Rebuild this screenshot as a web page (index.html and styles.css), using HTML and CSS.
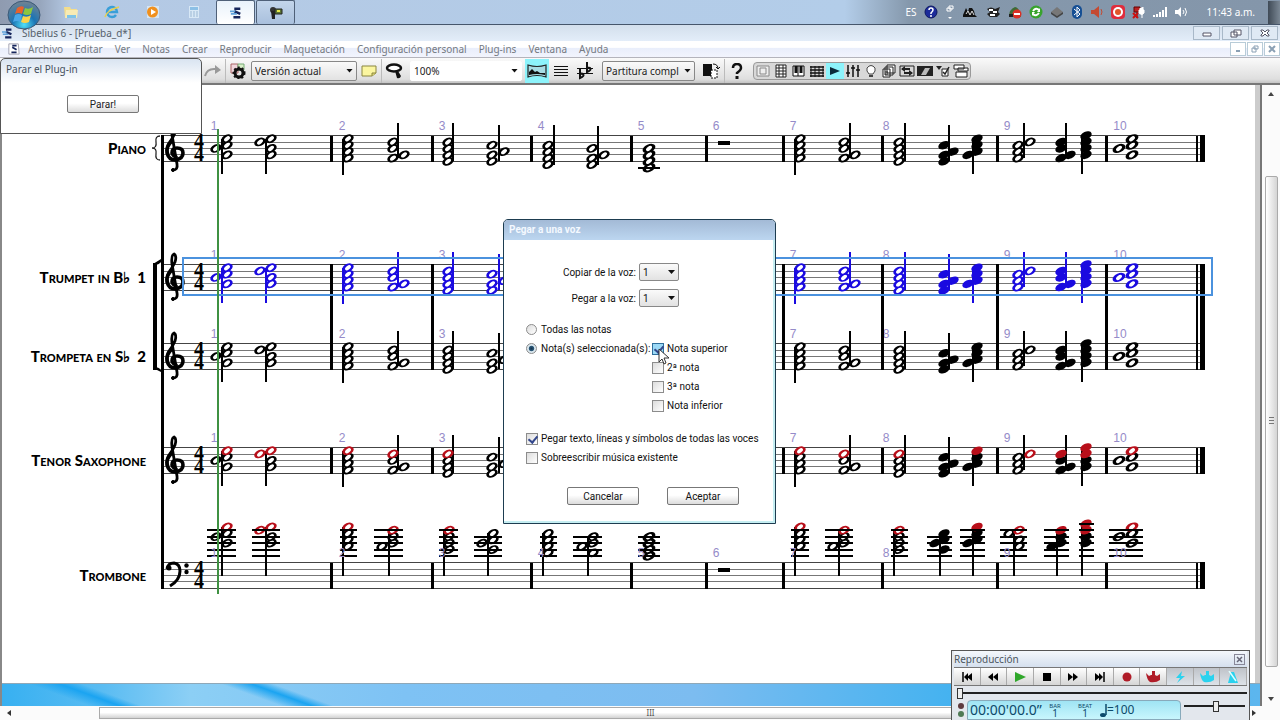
FILE: index.html
```html
<!doctype html>
<html lang="es">
<head>
    <meta charset="UTF-8">
    <meta name="viewport" content="width=device-width, initial-scale=1.0">
    <title>Sibelius 6 - [Prueba_d*]</title>
    <link rel="stylesheet" href="styles.css">
</head>
<body>
<header class="taskbar">
    <button type="button" class="start" aria-label="Inicio">
        <svg width="34" height="30" viewBox="0 0 34 30">
            <defs>
                <radialGradient id="orb" cx="50%" cy="85%" r="80%">
                    <stop offset="0" stop-color="#4fe0f8"/>
                    <stop offset="0.45" stop-color="#1b74b4"/>
                    <stop offset="1" stop-color="#6c8294"/>
                </radialGradient>
            </defs>
            <ellipse cx="17" cy="15" rx="16" ry="14" fill="url(#orb)" stroke="#3c5a78"/>
            <path d="M10 8q4-3 7-1l-2 7q-4-2-7 0z" fill="#e8622c"/>
            <path d="M18 8q4 2 8-1l-2 7q-4 2-8 0z" fill="#8cc63e"/>
            <path d="M8 15q4-2 7 0l-2 7q-3-2-7 0z" fill="#4aa8e8"/>
            <path d="M16 16q4 2 8-1l-2 7q-4 2-8 0z" fill="#fbd24a"/>
        </svg>
    </button>
    <nav class="launch">
        <button type="button" aria-label="Explorador">
            <svg width="16" height="14" viewBox="0 0 16 14"><path d="M1 2h6l1 2h6v8H2z" fill="#f3dd8c"/><path d="M3 5h12l-1 8H2z" fill="#f8ebb4"/><path d="M4 10h9v3H4z" fill="#7fc4e8"/></svg>
        </button>
        <button type="button" aria-label="Internet Explorer">
            <svg width="16" height="14" viewBox="0 0 16 14"><path d="M12 10a5 5 0 1 1 1-3H4" fill="none" stroke="#3a9fd8" stroke-width="2.5"/><path d="M1 12Q3 5 15 2" fill="none" stroke="#e6cf52" stroke-width="1.5"/></svg>
        </button>
        <button type="button" aria-label="Reproductor">
            <svg width="14" height="14" viewBox="0 0 14 14"><path d="M1 1h12v12H1z" fill="#d5e6f5"/><circle cx="6.5" cy="7" r="5.5" fill="#f0901e"/><path d="M5 4l5 3-5 3z" fill="#fff"/></svg>
        </button>
        <button type="button" aria-label="Calculadora">
            <svg width="12" height="14" viewBox="0 0 12 14"><path d="M1 1h10v12H1z" fill="#d8e8f6"/><path d="M2 2h8v3H2z" fill="#8cc0e6"/><path d="M2 7h8M2 9h8M2 11h8" stroke="#9bb8d4" stroke-dasharray="2 1"/></svg>
        </button>
    </nav>
    <button type="button" class="task active" aria-label="Sibelius">
        <svg width="12" height="12" viewBox="0 0 14 14"><path d="M5 2h7M5 5l7 3M4 12h8" stroke="#17265c" stroke-width="3"/><path d="M0 5h6M1 8h7" stroke="#5fa2dc" stroke-width="2"/></svg>
    </button>
    <button type="button" class="task" aria-label="Captura">
        <svg width="16" height="14" viewBox="0 0 16 14"><circle cx="5" cy="4" r="3" fill="#333"/><path d="M3 5h4v8H4z" fill="#222"/><path d="M7 3h7v5H7z" fill="#5c7434" stroke="#222"/><path d="M9 5h3" stroke="#e4e84a" stroke-width="2"/></svg>
    </button>
    <div class="tray">
        <span class="lang">ES</span>
        <svg width="14" height="14" viewBox="0 0 14 14"><circle cx="7" cy="7" r="6" fill="#1c2c9a" stroke="#0d1760"/><path d="M5 5q0-2 2-2t2 2q0 1-2 3v1M7 10v2" fill="none" stroke="#fff" stroke-width="1.5"/></svg>
        <svg width="10" height="14" viewBox="0 0 10 14"><path d="M4 1h4v3H4zM2 3h4v3H2z" fill="none" stroke="#fff"/><path d="M3 12h4l-2 2z" fill="#fff"/></svg>
        <svg width="16" height="14" viewBox="0 0 16 14"><path d="M1 10l3-7 2 4 1-4h3l2 3 1 4 2 2H1z" fill="#111"/><path d="M4 9l2-3 2 4 2-4 2 4" fill="none" stroke="#ddd"/></svg>
        <svg width="16" height="14" viewBox="0 0 16 14"><path d="M2 4q4-3 8 0l5-2-2 5 2 2-3 3H5L2 9l3-2z" fill="#222"/><path d="M4 5h4M8 7h4M5 10h5" stroke="#fff" stroke-width="2"/></svg>
        <svg width="14" height="14" viewBox="0 0 14 14"><path d="M1 12q0-8 6-10 5 1 6 10z" fill="#3d6b36"/><circle cx="9" cy="9" r="4.5" fill="#d93025"/><path d="M6 9h6" stroke="#fff" stroke-width="2"/><path d="M1 9h4v3H1z" fill="#222"/></svg>
        <svg width="14" height="14" viewBox="0 0 14 14"><circle cx="7" cy="7" r="6.5" fill="#38a32c"/><path d="M4 6q3-4 6-1M10 8q-3 4-6 1" fill="none" stroke="#fff" stroke-width="2"/><path d="M11 3v4H8zM3 11V7h3z" fill="#fff"/></svg>
        <svg width="14" height="14" viewBox="0 0 14 14"><path d="M7 2l6 5-6 4-6-4z" fill="#777"/><path d="M1 7l6 4 6-4v2l-6 4-6-4z" fill="#444"/></svg>
        <svg width="12" height="14" viewBox="0 0 12 14"><rect x="1" width="10" height="14" rx="5" fill="#164f94"/><path d="M3 4l6 5-3 3V2l3 3-6 5" fill="none" stroke="#fff"/></svg>
        <svg width="14" height="14" viewBox="0 0 14 14"><path d="M1 5h3l5-4v12L4 9H1z" fill="#c44a32"/><path d="M11 4q2 3 0 6" fill="none" stroke="#c44a32"/></svg>
        <svg width="14" height="14" viewBox="0 0 14 14"><rect width="14" height="14" rx="4" fill="#e02c3c"/><circle cx="7" cy="7" r="5" fill="#fff"/><circle cx="7" cy="7" r="3" fill="#e0562a"/></svg>
        <svg width="14" height="14" viewBox="0 0 14 14"><path d="M2 2h6v5H2zM5 7v6" fill="#b22" stroke="#600"/><path d="M8 3v2h-1v3q3 3 5 0V5h-1V2M10 9v4" fill="#fff" stroke="#fff"/><path d="M1 8l5 5M6 8l-5 5" stroke="#c11" stroke-width="2"/></svg>
        <svg width="14" height="14" viewBox="0 0 14 14"><path d="M1 12v-2M4 12V9M7 12V7M10 12V5M13 12V2" stroke="#fff" stroke-width="2"/></svg>
        <svg width="14" height="14" viewBox="0 0 14 14"><path d="M1 5h3l3-3v10L4 9H1z" fill="#fff"/><path d="M9 5q2 2 0 4M11 3q3 4 0 8" fill="none" stroke="#fff"/></svg>
        <time class="clock">11:43 a.m.</time>
        <button type="button" class="peek" aria-label="Mostrar escritorio"></button>
    </div>
</header>

<div class="titlebar">
    <svg width="11" height="11" viewBox="0 0 14 14"><path d="M5 2h7M5 5l7 3M4 12h8" stroke="#17265c" stroke-width="3"/><path d="M0 5h6M1 8h7" stroke="#5fa2dc" stroke-width="2"/></svg>
    <h1>Sibelius 6 - [Prueba_d*]</h1>
    <div class="win-btns">
        <button type="button" aria-label="Minimizar"><svg width="10" height="8" viewBox="0 0 10 8"><path d="M1 4h8v3H1z" fill="#fff" stroke="#556"/></svg></button>
        <button type="button" aria-label="Restaurar"><svg width="12" height="9" viewBox="0 0 12 9"><path d="M4 1h7v5H4zM1 3h6v5H1z" fill="#fff" stroke="#556"/></svg></button>
        <button type="button" aria-label="Cerrar"><svg width="10" height="8" viewBox="0 0 10 8"><path d="M1 1h2l2 2 2-2h2v1L7 4l2 2v1H7L5 5 3 7H1V6l2-2-2-2z" fill="#fff" stroke="#556"/></svg></button>
    </div>
</div>

<nav class="menubar">
    <svg width="12" height="12" viewBox="0 0 14 14"><path d="M1 1h11l1 12H1z" fill="#fff" stroke="#99a"/><path d="M5 3h5M5 5l5 3M4 11h6" stroke="#17265c" stroke-width="2"/></svg>
    <a href="#">Archivo</a>
    <a href="#">Editar</a>
    <a href="#">Ver</a>
    <a href="#">Notas</a>
    <a href="#">Crear</a>
    <a href="#">Reproducir</a>
    <a href="#">Maquetación</a>
    <a href="#">Configuración personal</a>
    <a href="#">Plug-ins</a>
    <a href="#">Ventana</a>
    <a href="#">Ayuda</a>
    <div class="doc-btns">
        <button type="button" aria-label="Minimizar documento"><svg width="8" height="8" viewBox="0 0 8 8"><path d="M2 6h4" stroke="#8aa0b4" stroke-width="2"/></svg></button>
        <button type="button" aria-label="Restaurar documento"><svg width="8" height="8" viewBox="0 0 8 8"><path d="M3 1h4v3H3zM1 3h4v4H1z" fill="#fff" stroke="#8aa0b4"/></svg></button>
        <button type="button" aria-label="Cerrar documento"><svg width="8" height="8" viewBox="0 0 8 8"><path d="M1 1l6 6M7 1L1 7" stroke="#8aa0b4" stroke-width="2"/></svg></button>
    </div>
</nav>

<div class="toolbar">
    <button type="button" class="tool redo" aria-label="Rehacer"><svg width="18" height="14" viewBox="0 0 18 14"><path d="M1 12Q3 4 12 5" fill="none" stroke="#999" stroke-width="2"/><path d="M11 1l6 5-6 4z" fill="#999"/></svg></button>
    <span class="sep"></span>
    <button type="button" class="tool" aria-label="Versión"><svg width="16" height="16" viewBox="0 0 16 16"><path d="M1 1h7v9H1z" fill="#f0d6dc" stroke="#a66"/><path d="M8 1h6v6H8z" fill="#d8f0c8" stroke="#7a7"/><circle cx="9" cy="10" r="4" fill="none" stroke="#111" stroke-width="3"/><circle cx="9" cy="10" r="5.5" fill="none" stroke="#111" stroke-width="2" stroke-dasharray="2 2"/></svg></button>
    <span class="pick version"><select aria-label="Versión"><option>Versión actual</option></select></span>
    <button type="button" class="tool" aria-label="Comentario"><svg width="16" height="12" viewBox="0 0 16 12"><path d="M1 1h14v7l-4 3H1z" fill="#fbf6a0" stroke="#8a8640"/><path d="M11 11V8h4" fill="#ddd670" stroke="#8a8640"/></svg></button>
    <span class="sep"></span>
    <button type="button" class="tool" aria-label="Zoom"><svg width="18" height="16" viewBox="0 0 18 16"><ellipse cx="9" cy="5" rx="7" ry="3.5" fill="#fff" stroke="#111" stroke-width="2.5"/><path d="M10 8h3l3 5q-1 3-4 2z" fill="#111"/></svg></button>
    <span class="pick zoom"><select aria-label="Nivel de zoom"><option>100%</option></select></span>
    <button type="button" class="tool on" aria-label="Panorama"><svg width="20" height="14" viewBox="0 0 20 14"><path d="M1 1q9 3 18 0v12q-9-3-18 0z" fill="#a8dce4" stroke="#222" stroke-width="1.2"/><path d="M2 8l3-3 3 3 2-1 3 2h5v2q-8-2-16 0z" fill="#111"/></svg></button>
    <button type="button" class="tool" aria-label="Pentagramas"><svg width="16" height="14" viewBox="0 0 16 14"><path d="M1 2.5h14M1 5.5h14M1 8.5h14M1 11.5h14" stroke="#111"/></svg></button>
    <button type="button" class="tool" aria-label="Transportar"><svg width="18" height="18" viewBox="0 0 18 18"><path d="M1 6.500h16M1 11.500h16" stroke="#111"/><path d="M4 6v10q5-2 3-4-2-1-3 1M11 0v10q5-2 3-4-2-1-3 1" fill="none" stroke="#111" stroke-width="2"/></svg></button>
    <span class="pick parts"><select aria-label="Parte"><option>Partitura compl</option></select></span>
    <button type="button" class="tool" aria-label="Cambiar parte"><svg width="18" height="18" viewBox="0 0 18 18"><path d="M1 2h9v12H1z" fill="#111"/><path d="M9 8h6v8H9z" fill="#fff" stroke="#111" stroke-dasharray="2 1"/><path d="M11 2q5 0 5 5M14 5l2 2 2-2" fill="none" stroke="#111"/></svg></button>
    <span class="sep"></span>
    <button type="button" class="tool help" aria-label="Ayuda"><svg width="12" height="16" viewBox="0 0 12 16"><path d="M2 5q0-4 4-4t4 4q0 2-4 5v1" fill="none" stroke="#111" stroke-width="2.5"/><path d="M6 13v3" stroke="#111" stroke-width="3"/></svg></button>
    <div class="panels">
        <button type="button" aria-label="Navegador"><svg width="14" height="12" viewBox="0 0 14 12"><path d="M1 1h12v10H1zM4 3h6v6H4z" fill="#eee" stroke="#888"/></svg></button>
        <button type="button" aria-label="Teclado numérico"><svg width="12" height="14" viewBox="0 0 12 14"><path d="M1 1h10v12H1zM4 1v12M8 1v12M1 4h10M1 7h10M1 10h10" fill="#fff" stroke="#222"/></svg></button>
        <button type="button" aria-label="Teclado"><svg width="14" height="12" viewBox="0 0 14 12"><path d="M1 1h11v10H1z" fill="#fff" stroke="#111"/><path d="M4 1v7M9 1v7" stroke="#111" stroke-width="3"/><path d="M6 1v10" stroke="#111"/></svg></button>
        <button type="button" aria-label="Diapasón"><svg width="16" height="12" viewBox="0 0 16 12"><path d="M1 2h14M1 5h14M1 8h14M1 11h14" stroke="#111" stroke-width="1.5"/><path d="M2 1v11M6 1v11M10 1v11M14 1v11" stroke="#111"/></svg></button>
        <button type="button" class="on" aria-label="Reproducción"><svg width="12" height="12" viewBox="0 0 12 12"><path d="M1 2l10 4-10 4z" fill="#0a2a3a"/></svg></button>
        <button type="button" aria-label="Mezclador"><svg width="14" height="14" viewBox="0 0 14 14"><path d="M2 1v12M7 1v12M12 1v12M0 9h4M5 4h4M10 6h4" stroke="#111" stroke-width="1.5"/></svg></button>
        <button type="button" aria-label="Ideas"><svg width="12" height="14" viewBox="0 0 12 14"><path d="M4 10q-3-3-2-6 4-5 8 0 1 3-2 6z" fill="#fff" stroke="#444"/><path d="M4 12h4" stroke="#444" stroke-width="2"/></svg></button>
        <button type="button" aria-label="Partes"><svg width="14" height="14" viewBox="0 0 14 14"><path d="M5 1h8v8H5zM3 3h8v8H3zM1 5h7v8H1z" fill="#fff" stroke="#222"/><path d="M3 8h3M3 10h3" stroke="#222"/></svg></button>
        <button type="button" aria-label="Comparar"><svg width="16" height="12" viewBox="0 0 16 12"><path d="M1 1h14M1 11h14M1 1v10M15 1v10" stroke="#222"/><path d="M3 4h8M5 8h8" stroke="#222" stroke-width="2"/><path d="M6 1v6L2 4zM10 5v6l4-3z" fill="#222"/></svg></button>
        <button type="button" aria-label="Vídeo"><svg width="16" height="12" viewBox="0 0 16 12"><path d="M0 1h16v10H0z" fill="#222"/><path d="M4 10l4-7h5l-4 7z" fill="#bbb"/></svg></button>
        <button type="button" aria-label="Propiedades"><svg width="14" height="12" viewBox="0 0 14 12"><path d="M0 1h6L3 5z" fill="#222"/><path d="M6 4h6v7H6z" fill="#fff" stroke="#222"/><path d="M7 7l2 2 4-7" fill="none" stroke="#222" stroke-width="1.5"/></svg></button>
        <button type="button" aria-label="Ventanas"><svg width="16" height="14" viewBox="0 0 16 14"><path d="M1 1h10v4H1zM5 4h10v3H5zM3 8h11v5H3z" fill="#fff" stroke="#222"/></svg></button>
    </div>
</div>

<main class="workspace">
    <div class="paper">
        <div class="page">
            <svg id="score" role="img" aria-label="Partitura"></svg>
        </div>
        <div class="desk"></div>
    </div>
    <div class="vscroll"><span class="up"></span><span class="thumb"></span><span class="down"></span></div>
</main>
<div class="hscroll"><span class="left"></span><span class="thumb">III</span><span class="right"></span></div>

<section class="window plugin">
    <h2>Parar el Plug-in</h2>
    <button type="button" class="btn">Parar!</button>
</section>

<form class="window dialog" onsubmit="return false">
    <h2>Pegar a una voz</h2>
    <div class="voices">
        <label for="from">Copiar de la voz:</label>
        <span class="pick"><select id="from"><option>1</option></select></span>
        <label for="to">Pegar a la voz:</label>
        <span class="pick"><select id="to"><option>1</option></select></span>
    </div>
    <div class="which">
        <label class="wide"><input type="radio" name="notes"> Todas las notas</label>
        <label><input type="radio" name="notes" checked> Nota(s) seleccionada(s):</label>
        <label class="hot"><input type="checkbox" checked> Nota superior</label>
        <label class="second"><input type="checkbox"> 2ª nota</label>
        <label class="second"><input type="checkbox"> 3ª nota</label>
        <label class="second"><input type="checkbox"> Nota inferior</label>
    </div>
    <div class="extras">
        <label><input type="checkbox" checked> Pegar texto, líneas y símbolos de todas las voces</label>
        <label><input type="checkbox"> Sobreescribir música existente</label>
    </div>
    <div class="actions">
        <button type="button" class="btn">Cancelar</button>
        <button type="submit" class="btn">Aceptar</button>
    </div>
    <svg class="cursor" width="12" height="18" viewBox="0 0 12 18"><path d="M1 1v13l3-3 2 5 2-1-2-5h5z" fill="#fff" stroke="#333"/></svg>
</form>

<section class="playback">
    <div class="pb-title">
        <h2>Reproducción</h2>
        <button type="button" aria-label="Cerrar"><svg width="9" height="9" viewBox="0 0 9 9"><path d="M2 2l5 5M7 2L2 7" stroke="#667" stroke-width="1.5"/></svg></button>
    </div>
    <div class="transport">
        <button type="button" aria-label="Inicio"><svg width="12" height="10" viewBox="0 0 12 10"><path d="M2 0v10" stroke="#000" stroke-width="1.5"/><path d="M7 1v8L3 5zM11 1v8L6 5z"/></svg></button>
        <button type="button" aria-label="Rebobinar"><svg width="12" height="10" viewBox="0 0 12 10"><path d="M6 1v8L1 5zM11 1v8L6 5z"/></svg></button>
        <button type="button" aria-label="Reproducir"><svg width="12" height="10" viewBox="0 0 12 10"><path d="M1 0l11 5-11 5z" fill="#2fa72a"/></svg></button>
        <button type="button" aria-label="Detener"><svg width="10" height="10" viewBox="0 0 10 10"><path d="M1 1h8v8H1z"/></svg></button>
        <button type="button" aria-label="Avanzar"><svg width="12" height="10" viewBox="0 0 12 10"><path d="M1 1v8l5-4zM6 1v8l5-4z"/></svg></button>
        <button type="button" aria-label="Final"><svg width="12" height="10" viewBox="0 0 12 10"><path d="M10 0v10" stroke="#000" stroke-width="1.5"/><path d="M1 1v8l5-4zM5 1v8l4-4z"/></svg></button>
        <button type="button" aria-label="Grabar"><svg width="10" height="10" viewBox="0 0 10 10"><circle cx="5" cy="5" r="4.5" fill="#b01c28"/></svg></button>
        <button type="button" aria-label="Flexi-time"><svg width="16" height="12" viewBox="0 0 16 12"><path d="M1 2l3 3q4-3 8 0l3-2v6q-4 3-10 2Q2 9 1 2zM7 0h3v4H7z" fill="#b01c28"/></svg></button>
        <button type="button" class="down" aria-label="Live playback"><svg width="12" height="12" viewBox="0 0 12 12"><path d="M8 0L2 7h4l-3 5 8-7H7z" fill="#2ad2ee"/></svg></button>
        <button type="button" class="down" aria-label="Live tempo"><svg width="16" height="12" viewBox="0 0 16 12"><path d="M1 2l3 3q4-3 8 0l3-2v6q-4 3-10 2Q2 9 1 2zM7 0h3v4H7z" fill="#2ad2ee"/></svg></button>
        <button type="button" class="down" aria-label="Metrónomo"><svg width="12" height="12" viewBox="0 0 12 12"><path d="M4 1h3l4 11H1z" fill="#2ad2ee"/><path d="M2 0l7 10" stroke="#dff" stroke-width="1.5"/></svg></button>
    </div>
    <input type="range" class="timeline" min="0" max="100" value="0" aria-label="Posición">
    <div class="pb-bottom">
        <div class="leds"><i></i><i></i></div>
        <div class="lcd">
            <span class="count">00:00'00.0”</span>
            <span class="unit"><small>BAR</small>1</span>
            <span class="unit beat"><small>BEAT</small>1</span>
            <span class="tempo"><svg width="7" height="13" viewBox="0 0 7 13"><ellipse cx="3" cy="11" rx="3" ry="2" fill="#0d4a6b"/><path d="M6 0v11" stroke="#0d4a6b" stroke-width="1.5"/></svg>=100</span>
        </div>
        <input type="range" class="speed" min="0" max="100" value="53" aria-label="Tempo">
    </div>
</section>
<script src="script.js"></script>
</body>
</html>
```
FILE: styles.css
```css
* {
    box-sizing: border-box;
    margin: 0;
    padding: 0;
}

body {
    display: flex;
    flex-direction: column;
    height: 100vh;
    overflow: hidden;
    position: relative;
    background: #fff;
    font-family: "Noto Sans", "Open Sans", sans-serif;
    font-size: 10px;
    color: #222;
}

button, select, input {
    font: inherit;
    color: inherit;
}

button {
    display: inline-flex;
    align-items: center;
    justify-content: center;
    border: none;
    background: none;
}

svg {
    flex: none;
    display: block;
}

/* taskbar */
.taskbar {
    display: flex;
    flex: none;
    height: 25px;
    padding-left: 50px;
    border-bottom: 1px solid #46566b;
    background: linear-gradient(to right, #8f9bb0 0, #97a6bd 40px, #b4c9e4 70px, #b3cde9 66%, #8598ac 71%, #8496aa 100%);
}

.start {
    position: absolute;
    left: 7px;
    top: 0;
    z-index: 2;
}

.launch {
    display: flex;
    width: 166px;
}

.launch button {
    width: 41px;
}

.task {
    width: 39px;
    margin-right: 1px;
    border: 1px solid #4f6078;
    border-bottom: none;
    border-radius: 2px;
    background: linear-gradient(#c3d5eb, #a9c0dd);
}

.task.active {
    background: linear-gradient(#e9f2fb, #fff);
}

.tray {
    display: flex;
    align-items: center;
    gap: 7px;
    margin-left: auto;
    color: #fff;
}

.clock {
    margin: 0 6px 0 12px;
    font-size: 10px;
}

.peek {
    width: 12px;
    height: 23px;
    background: linear-gradient(to right, #3f4a56, #7a8794);
}

/* title and menu */
.titlebar {
    display: flex;
    align-items: center;
    flex: none;
    gap: 9px;
    height: 16px;
    padding-left: 2px;
    background: linear-gradient(#d3dfec, #e3edf9);
}

.titlebar h1 {
    font-size: 10px;
    font-weight: normal;
    color: #555f6b;
}

.win-btns {
    display: flex;
    gap: 2px;
    margin-left: auto;
    padding-right: 2px;
}

.win-btns button {
    width: 27px;
    height: 14px;
    border: 1px solid #a8b8c8;
    background: #dfe9f4;
}

.menubar {
    display: flex;
    align-items: center;
    flex: none;
    gap: 12px;
    height: 17px;
    padding-left: 8px;
    border-bottom: 1px solid #b4b4bc;
    background: linear-gradient(#fff 0, #fff 40%, #e9eefb 45%, #f2f4fd);
}

.menubar svg {
    margin-right: -4px;
}

.menubar a {
    color: #757a82;
    text-decoration: none;
}

.doc-btns {
    display: flex;
    gap: 1px;
    margin-left: auto;
}

.doc-btns button {
    width: 16px;
    height: 14px;
    border: 1px solid #b8ccd8;
    background: #fff;
}

.doc-btns svg {
    margin: 0;
}

/* toolbar */
.toolbar {
    display: flex;
    align-items: center;
    flex: none;
    height: 27px;
    padding-left: 201px;
    border-bottom: 2px solid #777;
    background: linear-gradient(#fafafa, #dedede 85%, #c4c4c4);
}

.tool {
    width: 24px;
    height: 24px;
}

.tool.on, .panels .on {
    background: #8df3fb;
}

.sep {
    width: 1px;
    height: 24px;
    background: #bbb;
}

.pick {
    position: relative;
    display: inline-block;
}

.pick select {
    display: block;
    width: 100%;
    height: 20px;
    padding: 0 3px;
    appearance: none;
    border: 1px solid #888;
    border-radius: 2px;
    background: linear-gradient(#fafafa, #e2e2e2);
}

.pick::after {
    content: "";
    position: absolute;
    right: 4px;
    top: 8px;
    width: 7px;
    height: 4px;
    background: #111;
    clip-path: polygon(0 0, 100% 0, 50% 100%);
    pointer-events: none;
}

.version {
    width: 106px;
    margin-left: 1px;
}

.zoom {
    width: 112px;
    margin: 0 3px 0 4px;
}

.zoom select {
    border-color: #fff;
    background: #fff;
}

.parts {
    width: 93px;
    margin-left: 5px;
}

.parts + .tool {
    margin: 0 1px 0 4px;
}

.panels {
    display: flex;
    margin-left: 4px;
    border: 1px solid #999;
    border-radius: 4px;
    background: #d8d8d8;
}

.panels button {
    width: 18px;
    height: 16px;
}

/* score area */
.workspace {
    display: flex;
    flex: 1;
    min-height: 0;
    border-left: 2px solid #888;
}

.paper {
    display: flex;
    flex-direction: column;
    flex: 1;
    min-width: 0;
    border-right: 2px solid #777;
}

.page {
    flex: 1;
    min-height: 0;
    overflow: hidden;
    border-right: 5px solid #ccc;
}

#score {
    width: 100%;
    height: 100%;
}

.desk {
    flex: none;
    height: 23px;
    border-top: 1px solid #8fa8b8;
    background:
        linear-gradient(20deg, transparent 36%, #1ba4f1 50%, transparent 60%) 8px 0 / 160px 22px no-repeat,
        linear-gradient(20deg, transparent 36%, #1ba4f1 50%, transparent 60%) 200px 0 / 160px 22px no-repeat,
        linear-gradient(to right, #37b0f1 0, #5abcf2 8%, #8ccff5 15%, #7ec2f4 32%, #7cbcf0 55%, #43b2f0 76%, #5cb6ee 100%);
}

.staff line, .staff rect, .bars rect {
    shape-rendering: crispEdges;
}

.staff line {
    stroke: #777;
}

.staff line.edge {
    stroke: #444;
}

.bar-number {
    fill: #958bc9;
    font: 12px "Liberation Sans", sans-serif;
    text-anchor: middle;
}

.meter {
    font: bold 20px "Liberation Serif", serif;
    text-anchor: middle;
}

.name {
    font: 900 15px "Lato", sans-serif;
    font-variant: small-caps;
    text-anchor: end;
    white-space: pre;
}

.selection {
    fill: none;
    stroke: #4b92de;
    stroke-width: 2;
}

.playline {
    stroke: #3f9142;
    stroke-width: 2;
}

.vscroll {
    display: flex;
    flex-direction: column;
    align-items: center;
    flex: none;
    width: 18px;
    padding: 7px 0 5px;
    background: #fbfbfb;
}

.vscroll .thumb {
    flex: 1;
    width: 13px;
    margin: 80px 0 30px;
    border: 1px solid #aaa;
    border-radius: 2px;
    background: linear-gradient(to right, #fff, #d4d4d4);
}

/* grip in the middle of the thumb */
.vscroll .thumb::before {
    content: "";
    display: block;
    width: 5px;
    height: 7px;
    margin: 240px auto 0;
    background: repeating-linear-gradient(#777 0, #777 1px, transparent 1px, transparent 3px);
}

.up, .down, .left, .right {
    flex: none;
}

.up, .vscroll .down {
    width: 6px;
    height: 4px;
    background: #444;
    clip-path: polygon(50% 0, 100% 100%, 0 100%);
}

.vscroll .down {
    clip-path: polygon(0 0, 100% 0, 50% 100%);
}

.hscroll {
    display: flex;
    align-items: center;
    flex: none;
    height: 14px;
    padding: 0 24px 0 7px;
    background: #fbfbfb;
}

.hscroll .thumb {
    flex: 1;
    height: 12px;
    margin: 0 50px 0 88px;
    border: 1px solid #aaa;
    background: linear-gradient(#fff 45%, #d2d2d2);
    text-align: center;
    font-size: 8px;
    line-height: 10px;
    color: #555;
}

.hscroll .left, .hscroll .right {
    width: 4px;
    height: 6px;
    background: #333;
    clip-path: polygon(0 50%, 100% 0, 100% 100%);
}

.hscroll .right {
    clip-path: polygon(0 0, 100% 50%, 0 100%);
}

/* floating windows */
.window {
    position: absolute;
    display: flex;
    flex-direction: column;
    border: 1px solid #28343e;
    border-radius: 5px 5px 0 0;
    background: #fff;
}

.window h2, .pb-title h2 {
    font-size: 10px;
    font-weight: normal;
}

.btn {
    width: 72px;
    height: 18px;
    border: 1px solid #777;
    border-radius: 2px;
    background: linear-gradient(#fff 45%, #dcdcdc);
    font-family: "Roboto", "Liberation Sans", sans-serif;
    font-size: 10px;
}

.plugin {
    left: 0;
    top: 58px;
    width: 202px;
    height: 76px;
    gap: 16px;
    border-color: #555;
    background: linear-gradient(#d9e4f1, #fff 24px);
}

.plugin h2 {
    padding-left: 5px;
    line-height: 20px;
    color: #444f5c;
}

.plugin .btn {
    margin-left: 66px;
}

.dialog {
    left: 503px;
    top: 219px;
    width: 273px;
    height: 305px;
    border-color: #1d3c50;
    box-shadow: inset -2px -2px 0 #c5eef2;
    font-family: "Roboto", "Liberation Sans", sans-serif;
    font-size: 10px;
    color: #111;
}

.dialog h2 {
    padding-left: 5px;
    border-radius: 4px 4px 0 0;
    background: linear-gradient(#a3bad6, #bcd6f0);
    font-size: 10px;
    font-weight: bold;
    line-height: 20px;
    color: #f4f9ff;
}

.voices {
    display: grid;
    grid-template-columns: 132px 40px;
    grid-auto-rows: 18px;
    gap: 8px 3px;
    align-items: center;
    margin-top: 23px;
}

.voices label {
    text-align: right;
}

.voices select {
    height: 18px;
}

.voices .pick::after {
    top: 7px;
}

.which {
    display: grid;
    grid-template-columns: 126px 1fr;
    grid-template-rows: 20px;
    grid-auto-rows: 19px;
    margin: 12px 0 0 22px;
}

.wide {
    grid-column: 1 / 3;
}

.second {
    grid-column: 2;
}

.dialog label {
    white-space: nowrap;
}

.which label, .extras label {
    display: flex;
    align-items: center;
    gap: 3px;
}

.dialog input {
    flex: none;
    appearance: none;
    width: 12px;
    height: 12px;
    border: 1px solid #8c8c8c;
    background: linear-gradient(135deg, #dcdcdc, #fff);
}

.dialog input[type="radio"] {
    width: 11px;
    height: 11px;
    margin-right: 1px;
    border-radius: 50%;
}

.dialog input[type="radio"]:checked {
    background: radial-gradient(#16344f 0, #2b5878 35%, #dbe8ef 50%);
}

.dialog input[type="checkbox"]:checked::before {
    content: "";
    display: block;
    width: 4px;
    height: 7px;
    margin: 0 0 0 3px;
    border: solid #33478c;
    border-width: 0 2px 2px 0;
    transform: rotate(40deg);
}

.dialog .hot input {
    border-color: #2f6f9c;
    background: #9cd9f6;
}

.extras {
    display: grid;
    grid-auto-rows: 19px;
    margin: 14px 0 0 22px;
}

.actions {
    display: flex;
    gap: 28px;
    margin: 20px 0 0 63px;
}

.cursor {
    position: absolute;
    left: 154px;
    top: 128px;
}

/* playback panel */
.playback {
    position: absolute;
    right: 30px;
    bottom: 0;
    display: flex;
    flex-direction: column;
    width: 299px;
    height: 70px;
    padding: 0 2px;
    border: 1px solid #555;
    border-bottom: none;
    background: #e3e7ed;
}

.pb-title {
    display: flex;
    align-items: center;
    justify-content: space-between;
    height: 16px;
    background: linear-gradient(#f4f8fc, #d5e0ee);
    color: #4b5560;
}

.pb-title button {
    width: 11px;
    height: 11px;
    margin-right: 2px;
    border: 1px solid #889;
}

.transport {
    display: flex;
    height: 19px;
    border: solid #777;
    border-width: 1px 0;
}

.transport button {
    flex: 1;
    border-right: 1px solid #aaa;
    background: linear-gradient(#fff, #d5d5d5);
}

.transport .down {
    background: linear-gradient(#bfc3c9, #dde2e8);
}

.playback input {
    appearance: none;
    height: 12px;
    background: linear-gradient(#222, #222) 0 50% / 100% 2px no-repeat;
}

.playback input::-webkit-slider-thumb {
    appearance: none;
    width: 6px;
    height: 11px;
    border: 1px solid #333;
    background: #eee;
}

.timeline {
    margin: 1px 0 1px 3px;
}

.pb-bottom {
    display: flex;
    flex: 1;
    gap: 3px;
}

.leds {
    display: grid;
    gap: 2px;
    align-content: center;
    padding-left: 4px;
}

.leds i {
    width: 6px;
    height: 6px;
    border-radius: 50%;
    background: #5e3a3e;
}

.leds i + i {
    background: #4f7a55;
}

.lcd {
    display: flex;
    align-items: center;
    width: 214px;
    padding-left: 2px;
    border: 1px solid #8ab;
    border-radius: 4px 4px 0 0;
    background: linear-gradient(#9fe4f4, #c8f6fd);
    color: #0d4a6b;
    font-size: 12px;
    line-height: 18px;
}

.count {
    width: 80px;
    font-size: 14px;
}

.unit {
    display: flex;
    flex-direction: column;
    align-items: center;
    width: 10px;
    font-size: 10px;
    line-height: 9px;
}

.unit small {
    font-size: 6px;
    line-height: 6px;
}

.beat {
    margin: 0 10px 0 20px;
}

.tempo {
    display: flex;
    align-items: center;
}

.speed {
    width: 61px;
}
```
FILE: script.js
```javascript
var NS = 'http://www.w3.org/2000/svg';
var svg = document.querySelector('#score');
var STEP = 3.23; // half of a staff space

// the drawing starts under the toolbar and right of the window frame
var root = el('g', {transform: 'translate(-2,-85)'}, svg);

// covered: bars whose numbers lie behind the dialog
var staves = [
    {name: 'Piano', top: 135},
    {name: 'Trumpet in B♭  1', top: 264, color: '#1a0ae0', covered: [4, 5, 6]},
    {name: 'Trompeta en S♭  2', top: 343, covered: [4, 5, 6]},
    {name: 'Tenor Saxophone', top: 447, red: true, covered: [4, 5, 6]},
    {name: 'Trombone', top: 562, red: true, bass: true}
];

var bars = [331, 432, 531, 631, 706, 783, 882, 997, 1106];
var numbers = [214, 342, 442, 541, 641, 716, 793, 886, 1007, 1120];

// kind, stem x, stem end (px from the top line), heads as [x, step], index list of red heads
var chords = [
    ['half', 221.5, 38, [[227, 1], [227, 3], [227, 6], [216, 4]], [0]],
    ['half', 266, 38, [[271, 1], [260, 2], [271, 4], [271, 6]], [0, 1]],
    ['half', 343, 39, [[348, 1], [348, 3], [348, 5], [348, 7]], [0]],
    ['half', 398, -13, [[393, 2], [393, 4], [393, 7], [404, 6]], [0]],
    ['half', 453, -13, [[448, 2], [448, 4], [448, 6], [448, 8]], [0]],
    ['half', 498.5, -11, [[492, 3], [492, 6], [492, 8], [504, 5]], []],
    ['half', 553.5, -11, [[548, 3], [548, 5], [548, 7], [548, 9]], []],
    ['half', 598, -10, [[592, 4], [592, 7], [592, 9], [604, 6]], []],
    ['whole', 0, 0, [[649, 4], [649, 6], [649, 8], [649, 10]], []],
    ['half', 794.5, 39, [[800, 1], [800, 3], [800, 5], [800, 7]], [0]],
    ['half', 849.5, -13, [[844, 2], [844, 4], [844, 7], [855, 6]], [0]],
    ['half', 904.5, -13, [[899, 2], [899, 4], [899, 6], [899, 8]], [0]],
    ['quarter', 948.5, -11, [[944, 3], [944, 6], [944, 8], [953, 5]], []],
    ['quarter', 972.5, 38, [[977, 1], [977, 3], [977, 5], [968, 6]], [0]],
    ['half', 1024, -13, [[1030, 2], [1018, 3], [1018, 5], [1018, 7]], [0]],
    ['quarter', 1065.5, -13, [[1061, 2], [1061, 4], [1061, 7], [1070, 6]], [0]],
    ['quarter', 1082, 38, [[1086, 0], [1086, 2], [1086, 4], [1086, 6]], [0, 1]],
    ['whole', 0, 0, [[1132, 1], [1132, 3], [1132, 6], [1119, 4]], [0]]
];

// the same chords on the bass staff: all stems down, with ledger lines [x1, x2, first step]
var bassChords = [
    ['half', 221.5, [[227, -11], [227, -9], [227, -6], [216, -8]], [0], [207, 236, -10]],
    ['half', 266, [[271, -11], [260, -10], [271, -8], [271, -6]], [0, 1], [252, 280, -10]],
    ['half', 343, [[348, -11], [348, -9], [348, -7], [348, -5]], [0], [340, 357, -10]],
    ['half', 388.5, [[393, -10], [393, -8], [393, -6], [382, -5]], [0], [374, 403, -10]],
    ['half', 443.5, [[449, -10], [449, -8], [449, -6], [449, -4]], [0], [439, 458, -10]],
    ['half', 488, [[493, -9], [493, -7], [493, -4], [482, -6]], [], [474, 502, -8]],
    ['half', 543, [[548, -9], [548, -7], [548, -5], [548, -3]], [], [540, 557, -8]],
    ['half', 587.5, [[593, -8], [593, -6], [593, -3], [582, -5]], [], [573, 602, -8]],
    ['whole', 0, [[649, -8], [649, -6], [649, -4], [649, -2]], [], [638, 660, -8]],
    ['half', 794.5, [[800, -11], [800, -9], [800, -7], [800, -5]], [0], [791, 809, -10]],
    ['half', 839, [[844, -10], [844, -8], [844, -6], [833, -5]], [0], [825, 853, -10]],
    ['half', 894, [[899, -10], [899, -8], [899, -6], [899, -4]], [0], [891, 908, -10]],
    ['quarter', 939.5, [[944, -9], [944, -7], [944, -4], [935, -6]], [], [927, 952, -8]],
    ['quarter', 972.5, [[977, -11], [977, -9], [977, -7], [968, -6]], [0], [960, 985, -10]],
    ['half', 1013.5, [[1019, -10], [1019, -7], [1019, -5], [1009, -9]], [0], [1000, 1027, -10]],
    ['quarter', 1057, [[1061, -10], [1061, -8], [1061, -6], [1052, -5]], [0], [1044, 1069, -10]],
    ['quarter', 1082, [[1086, -12], [1086, -10], [1086, -8], [1086, -6]], [0, 1], [1079, 1094, -12]],
    ['whole', 0, [[1132, -11], [1132, -9], [1132, -6], [1119, -8]], [0], [1109, 1143, -10]]
];

function el(tag, attrs, parent, text) {
    var node = document.createElementNS(NS, tag);
    for (var key in attrs) {
        node.setAttribute(key, attrs[key]);
    }
    if (text) {
        node.textContent = text;
    }
    parent.appendChild(node);
    return node;
}

function rect(x, y, w, h, parent, fill) {
    el('rect', {x: x, y: y, width: w, height: h, fill: fill || '#000'}, parent);
}

function drawHead(kind, x, y, color, parent) {
    var turn = 'rotate(-24 ' + x + ' ' + y + ')';
    if (kind == 'quarter') {
        el('ellipse', {cx: x, cy: y, rx: 6, ry: 3.8, fill: color, transform: turn}, parent);
        return;
    }
    // open heads: full outline with a slim hole, thicker at both ends
    el('ellipse', {cx: x, cy: y, rx: kind == 'whole' ? 6.8 : 6, ry: 4, fill: color, transform: turn}, parent);
    el('ellipse', {cx: x, cy: y, rx: 3.4, ry: 1.9, fill: '#fff', transform: 'rotate(-38 ' + x + ' ' + y + ')'}, parent);
}

function drawChord(kind, stemX, end, heads, reds, ledger, staff, parent) {
    var color = staff.color || '#000';
    var top = staff.top + 0.5;
    var s, first, last;
    if (kind != 'whole') {
        // stem runs from the head farthest away from its free end
        var steps = heads.map(function (h) { return h[1]; });
        first = end > 0 ? Math.min.apply(null, steps) : Math.max.apply(null, steps);
        last = top + first * STEP;
        rect(stemX - 0.8, Math.min(last, top + end), 1.8, Math.abs(top + end - last), parent, color);
    }
    // red heads last, so that they lie on top
    heads.map(function (h, i) { return i; }).reverse().forEach(function (i) {
        var c = staff.red && reds.indexOf(i) > -1 ? '#b80f1a' : color;
        drawHead(kind, heads[i][0], top + heads[i][1] * STEP, c, parent);
    });
    if (ledger) {
        for (s = ledger[2]; s <= ledger[3]; s += 2) {
            rect(ledger[0], Math.round(top + s * STEP - 1), ledger[1] - ledger[0], 2, parent);
        }
    }
}

function drawTreble(top, parent) {
    var g = el('g', {transform: 'translate(0 ' + top + ')', fill: 'none', stroke: '#000', 'stroke-linecap': 'round'}, parent);
    el('path', {d: 'M173 35q5 0 4-6L172 0q-1-9 2-10 3 2 1 8-2 5-6 10-3 5-1 11', 'stroke-width': 2.8}, g);
    el('path', {d: 'M171 7q-5 5-4 11 2 7 8 7 8-1 8-7 0-5-6-5-5 0-5 5 1 3 4 4', 'stroke-width': 3.6}, g);
    el('circle', {cx: 173, cy: 35, r: 1.5, fill: '#000'}, g);
}

function drawBass(top, parent) {
    var g = el('g', {transform: 'translate(0 ' + top + ')'}, parent);
    el('path', {d: 'M167 7q1-6 7-6 6 1 6 8 0 9-10 15', fill: 'none', stroke: '#000', 'stroke-width': 3}, g);
    el('circle', {cx: 169, cy: 6, r: 2.5}, g);
    el('circle', {cx: 186.5, cy: 3.5, r: 2.2}, g);
    el('circle', {cx: 186.5, cy: 10, r: 2.2}, g);
}

function drawStaff(staff) {
    var g = el('g', {'class': 'staff'}, root);
    var top = staff.top;
    [0, 7, 13, 19, 26].forEach(function (dy, i) {
        el('line', {x1: 161, x2: 1205, y1: top + dy + 0.5, y2: top + dy + 0.5, 'class': i % 4 == 0 ? 'edge' : ''}, g);
    });
    bars.forEach(function (x) {
        rect(x - 1, top + 1, 3, 26, g);
    });
    rect(1196, top + 1, 2, 26, g);
    rect(1200, top, 5, 27, g);

    el('text', {x: 146, y: top + 19, 'class': 'name'}, g, staff.name);
    el('text', {x: 199, y: top + 13, 'class': 'meter'}, g, '4');
    el('text', {x: 199, y: top + 26, 'class': 'meter'}, g, '4');
    if (staff.bass) {
        drawBass(top, g);
    } else {
        drawTreble(top, g);
    }

    // whole rest of bar 6
    rect(718, top + 6, 12, 4, g);

    if (staff.bass) {
        bassChords.forEach(function (c) {
            drawChord(c[0], c[1], 13, c[2], c[3], c[4].concat(-2), staff, g);
        });
    } else {
        chords.forEach(function (c, i) {
            drawChord(c[0], c[1], c[2], c[3], c[4], i == 8 ? [638, 660, 10, 10] : null, staff, g);
        });
    }
    numbers.forEach(function (x, i) {
        if (staff.covered && staff.covered.indexOf(i + 1) > -1) {
            return;
        }
        el('text', {x: x, y: top - 5, 'class': 'bar-number'}, g, String(i + 1));
    });
}

staves.forEach(drawStaff);

var frame = el('g', {'class': 'bars'}, root);
rect(161, 135, 3, 454, frame);
rect(153, 263, 4, 107, frame);
// bar lines shared by both trumpets
bars.forEach(function (x) {
    rect(x - 1, 264, 3, 106, frame);
});
rect(1196, 264, 2, 106, frame);
rect(1200, 264, 5, 106, frame);
el('path', {d: 'M153 264l8-5 3-3q-2 8-8 9zM153 368l8 4 3 4q-2-8-8-9z'}, root);
el('path', {d: 'M160 136q-5 0-4 6t-4 6q5 0 4 6t4 6', fill: 'none', stroke: '#222', 'stroke-width': 1.3}, root);
el('rect', {x: 183, y: 258, width: 1029, height: 37, 'class': 'selection'}, root);
el('line', {x1: 218, x2: 218, y1: 129, y2: 594, 'class': 'playline'}, root);
```
